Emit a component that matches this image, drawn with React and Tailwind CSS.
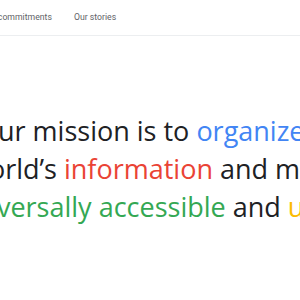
import React from "react";

const lines = [
  { offset: "ml-[-23px]", parts: [["Our mission is to ", "text-[#202124]"], ["organize", "text-[#4285f4]"], [" the world’s", "text-[#202124]"]] },
  { offset: "ml-[-32px]", parts: [["world’s ", "text-[#202124]"], ["information", "text-[#ea4335]"], [" and make it", "text-[#202124]"]] },
  { offset: "ml-[-43px]", parts: [["universally accessible", "text-[#34a853]"], [" and ", "text-[#202124]"], ["useful.", "text-[#fbbc04]"]] },
];

const App = () => {
  return (
    <div className="w-[300px] h-[300px] overflow-hidden bg-white" style={{ fontFamily: "'Open Sans', sans-serif" }}>
      {/* Nav */}
      <nav className="h-[36px] border-b border-[#eceef0] flex items-center whitespace-nowrap">
        <div className="flex items-center gap-[22px] ml-[-18px] text-[8.7px] text-[#5f6368]" style={{ fontFamily: "Roboto, sans-serif" }}>
          <span>Our commitments</span>
          <span>Our stories</span>
        </div>
      </nav>

      {/* Mission */}
      <section className="pt-[76px]">
        <h1 className="text-[27px] leading-[38px] font-normal whitespace-nowrap">
          {lines.map((line, i) => (
            <div key={i} className={line.offset}>
              {line.parts.map(([t, c], j) => (
                <span key={j} className={c}>{t}</span>
              ))}
            </div>
          ))}
        </h1>
      </section>
    </div>
  );
};

export default App;
